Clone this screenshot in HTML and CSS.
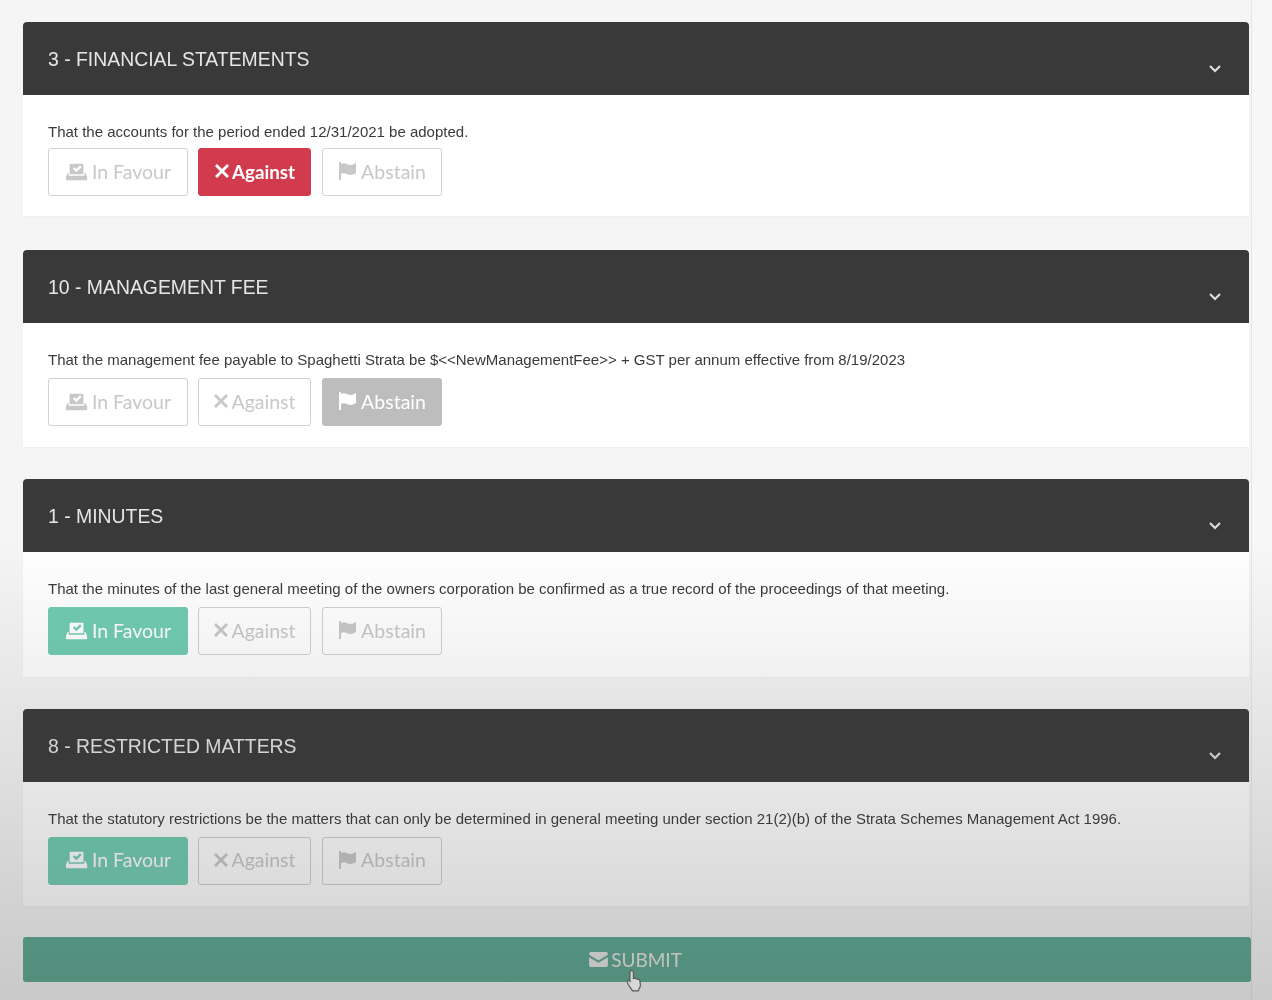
FILE: index.html
```html
<!DOCTYPE html>
<html lang="en">
<head>
    <meta charset="UTF-8">
    <meta name="viewport" content="width=device-width, initial-scale=1.0">
    <title>Motions</title>
    <link rel="stylesheet" href="styles.css">
</head>
<body>
    <svg class="icon-defs" width="0" height="0">
        <symbol id="icon-vote" viewBox="0 0 26 20">
            <path d="M6 1.500h13a1 1 0 0 1 1 1V13H5V2.500a1 1 0 0 1 1-1zM8.500 7l1.700-1.700 2 2 4-4L18 5l-5.800 5.800z" fill-rule="evenodd"/>
            <path d="M2.500 12H4v2.500h17V12h1.500l1.500 4v2.500a1 1 0 0 1-1 1H2a1 1 0 0 1-1-1V16z"/>
        </symbol>
        <symbol id="icon-times" viewBox="0 0 16 16">
            <path d="M3 1l5 5 5-5 2 2-5 5 5 5-2 2-5-5-5 5-2-2 5-5-5-5z"/>
        </symbol>
        <symbol id="icon-flag" viewBox="0 0 20 18">
            <path d="M1 0h2v18H1z"/>
            <path d="M3 2c4-2 6 1 9 1 2 0 4-1 6-2v10c-2 1-4 2-6 2-3 0-5-3-9-1z"/>
        </symbol>
        <symbol id="icon-envelope" viewBox="0 0 20 16">
            <path d="M2 0h16a2 2 0 0 1 2 2v1l-10 6L0 3V2a2 2 0 0 1 2-2z"/>
            <path d="M0 5.500l10 6 10-6V14a2 2 0 0 1-2 2H2a2 2 0 0 1-2-2z"/>
        </symbol>
    </svg>

    <div class="page">
        <div class="panel panel-first">
            <div class="panel-head">
                <h3>3 - FINANCIAL STATEMENTS</h3>
                <svg class="chevron" viewBox="0 0 14 10"><path d="M2 2l5 5 5-5"/></svg>
            </div>
            <div class="panel-body">
                <p>That the accounts for the period ended 12/31/2021 be adopted.</p>
                <div class="votes">
                    <button class="vote favour"><svg class="ic ic-vote"><use href="#icon-vote"/></svg>In Favour</button>
                    <button class="vote against on-against"><svg class="ic ic-times"><use href="#icon-times"/></svg>Against</button>
                    <button class="vote abstain"><svg class="ic ic-flag"><use href="#icon-flag"/></svg>Abstain</button>
                </div>
            </div>
        </div>

        <div class="panel">
            <div class="panel-head">
                <h3>10 - MANAGEMENT FEE</h3>
                <svg class="chevron" viewBox="0 0 14 10"><path d="M2 2l5 5 5-5"/></svg>
            </div>
            <div class="panel-body">
                <p>That the management fee payable to Spaghetti Strata be $&lt;&lt;NewManagementFee&gt;&gt; + GST per annum effective from 8/19/2023</p>
                <div class="votes">
                    <button class="vote favour"><svg class="ic ic-vote"><use href="#icon-vote"/></svg>In Favour</button>
                    <button class="vote against"><svg class="ic ic-times"><use href="#icon-times"/></svg>Against</button>
                    <button class="vote abstain on-abstain"><svg class="ic ic-flag"><use href="#icon-flag"/></svg>Abstain</button>
                </div>
            </div>
        </div>

        <div class="panel">
            <div class="panel-head">
                <h3>1 - MINUTES</h3>
                <svg class="chevron" viewBox="0 0 14 10"><path d="M2 2l5 5 5-5"/></svg>
            </div>
            <div class="panel-body">
                <p>That the minutes of the last general meeting of the owners corporation be confirmed as a true record of the proceedings of that meeting.</p>
                <div class="votes">
                    <button class="vote favour on-favour"><svg class="ic ic-vote"><use href="#icon-vote"/></svg>In Favour</button>
                    <button class="vote against"><svg class="ic ic-times"><use href="#icon-times"/></svg>Against</button>
                    <button class="vote abstain"><svg class="ic ic-flag"><use href="#icon-flag"/></svg>Abstain</button>
                </div>
            </div>
        </div>

        <div class="panel">
            <div class="panel-head">
                <h3>8 - RESTRICTED MATTERS</h3>
                <svg class="chevron" viewBox="0 0 14 10"><path d="M2 2l5 5 5-5"/></svg>
            </div>
            <div class="panel-body">
                <p>That the statutory restrictions be the matters that can only be determined in general meeting under section 21(2)(b) of the Strata Schemes Management Act 1996.</p>
                <div class="votes">
                    <button class="vote favour on-favour"><svg class="ic ic-vote"><use href="#icon-vote"/></svg>In Favour</button>
                    <button class="vote against"><svg class="ic ic-times"><use href="#icon-times"/></svg>Against</button>
                    <button class="vote abstain"><svg class="ic ic-flag"><use href="#icon-flag"/></svg>Abstain</button>
                </div>
            </div>
        </div>

        <button class="submit"><svg class="ic ic-envelope"><use href="#icon-envelope"/></svg>SUBMIT</button>
    </div>

    <!-- fade at the bottom of the frame + mouse pointer -->
    <div class="fade"></div>
    <svg class="pointer" viewBox="0 0 18 24">
        <path d="M6 1.500c1 0 1.800.8 1.800 1.800V10l1-.3c.8-.2 1.500 0 1.900.6.800-.3 1.600-.1 2 .6.900-.2 1.800.4 2 1.300l.5 4.300c.2 1.500-.3 3-1.300 4.200L13 23H7l-4.500-6.500L1.500 14c-.3-.9.100-1.700.9-2 .7-.2 1.400 0 1.800.6V3.300c0-1 .8-1.800 1.800-1.800z"/>
    </svg>
</body>
</html>
```

FILE: styles.css
```css
html, body {
    margin: 0;
    padding: 0;
}

body {
    position: relative;
    height: 1000px;
    overflow: hidden;
    background-color: #f7f7f7;
    font-family: "Liberation Sans", Arial, sans-serif;
    color: #333;
}

.icon-defs {
    position: absolute;
}

.page {
    box-sizing: border-box;
    width: 1252px;
    height: 1000px;
    padding: 22px 2px 0 23px;
    background-color: #f5f5f5;
    border-right: 1px solid #e6e6e6;
    filter: blur(0.6px);
}

.panel {
    margin-bottom: 32px;
    background-color: #fff;
    box-shadow: 0 1px 2px rgba(0, 0, 0, 0.03);
}

.panel-first {
    margin-bottom: 34px;
}

.panel-head {
    display: flex;
    justify-content: space-between;
    height: 73px;
    padding: 0 27px 0 25px;
    background-color: #393939;
    border-radius: 4px 4px 0 0;
}

.panel-head h3 {
    margin: 0;
    font-size: 19.4px;
    font-weight: normal;
    line-height: 75px;
    color: #e6e6e6;
}

.chevron {
    width: 14px;
    height: 10px;
    margin-top: 42px;
    fill: none;
    stroke: #ddd;
    stroke-width: 2.2;
}

.panel-body {
    height: 124.4px;
    padding: 0 25px;
    box-sizing: border-box;
}

.panel-first .panel-body {
    height: 121px;
}

.panel-body p {
    margin: 0;
    padding-top: 27px;
    font-size: 15px;
    line-height: 19px;
    color: #3a3a3a;
}

.votes {
    display: flex;
    gap: 10px;
    margin-top: 9px;
}

.panel-first .votes {
    margin-top: 7px;
}

.vote {
    display: flex;
    align-items: center;
    justify-content: center;
    box-sizing: border-box;
    height: 48px;
    padding: 0 0 2px;
    border: 1px solid #d0d0d0;
    border-radius: 3px;
    background-color: #fff;
    color: #c8c8c8;
    fill: #c8c8c8;
    font-family: Lato, "Liberation Sans", sans-serif;
    font-size: 19.5px;
}

.favour {
    width: 140px;
}

.against {
    width: 113px;
}

.abstain {
    width: 120px;
    margin-left: 1px;
}

.on-against {
    background-color: #d13b4d;
    border-color: #d13b4d;
    color: #fff;
    fill: #fff;
    font-size: 18.8px;
    font-weight: bold;
}

.on-abstain {
    background-color: #bdbdbd;
    border-color: #bdbdbd;
    color: #fff;
    fill: #fff;
}

.on-favour {
    background-color: #70ccb1;
    border-color: #70ccb1;
    color: #fff;
    fill: #fff;
}

.ic {
    flex: none;
    margin-right: 3px;
}

.ic-vote {
    width: 24px;
    height: 19px;
}

.ic-times {
    width: 16px;
    height: 16px;
    margin-right: 2px;
}

.ic-flag {
    width: 20px;
    height: 18px;
}

.ic-envelope {
    width: 19px;
    height: 15px;
}

.submit {
    display: flex;
    align-items: center;
    justify-content: center;
    box-sizing: border-box;
    width: 1228px;
    height: 45px;
    margin-top: -1px;
    padding: 0 3px 1px 0;
    border: none;
    border-radius: 3px;
    background-color: #5ba790;
    color: #e8e8e8;
    fill: #e8e8e8;
    font-family: Lato, "Liberation Sans", sans-serif;
    font-size: 19px;
}

.fade {
    position: absolute;
    left: 0;
    right: 0;
    top: 540px;
    bottom: 0;
    background: linear-gradient(to bottom, rgba(60, 60, 60, 0), rgba(60, 60, 60, 0.24));
    pointer-events: none;
}

.pointer {
    position: absolute;
    left: 626px;
    top: 969px;
    width: 17px;
    height: 23px;
    fill: #d8d8d8;
    stroke: #555;
    stroke-width: 1.2;
}
```
